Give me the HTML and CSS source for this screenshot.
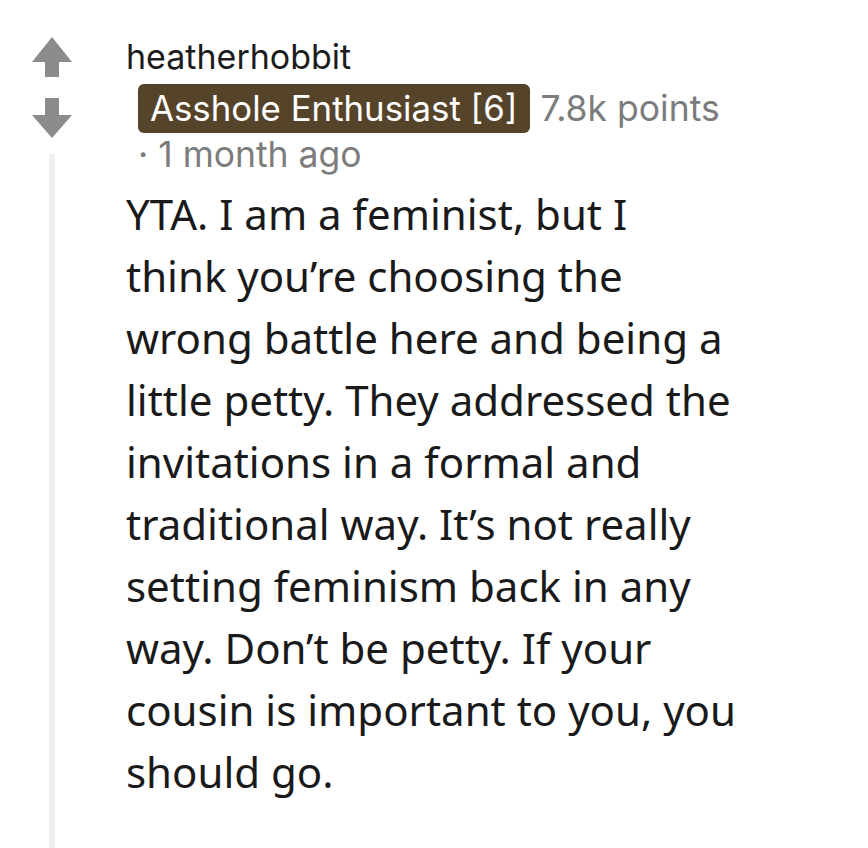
FILE: index.html
```html
<!DOCTYPE html>
<html lang="en">
<head>
    <meta charset="UTF-8">
    <meta name="viewport" content="width=device-width, initial-scale=1.0">
    <title>Comment</title>
    <link rel="stylesheet" href="styles.css">
</head>
<body>
    <div class="comment">
        <div class="votes">
            <svg class="arrow" width="40" height="40" viewBox="0 0 40 40">
                <path d="M20 0 L40 25 H27 V40 H13 V25 H0 Z" fill="#8c8c8c"/>
            </svg>
            <svg class="arrow down" width="40" height="40" viewBox="0 0 40 40">
                <path d="M13 0 H27 V17 H40 L20 40 L0 17 H13 Z" fill="#8c8c8c"/>
            </svg>
            <div class="thread-line"></div>
        </div>

        <div class="comment-body">
            <div class="author">heatherhobbit</div>
            <div class="meta">
                <span class="flair">Asshole Enthusiast [6]</span>
                <span class="points">7.8k points</span>
            </div>
            <div class="meta time">· 1 month ago</div>
            <p class="text">YTA. I am a feminist, but I think you’re choosing the wrong battle here and being a little petty. They addressed the invitations in a formal and traditional way. It’s not really setting feminism back in any way. Don’t be petty. If your cousin is important to you, you should go.</p>
        </div>
    </div>
</body>
</html>
```

FILE: styles.css
```css
body {
    margin: 0;
    background: #ffffff;
    font-family: "Noto Sans", sans-serif;
}

.comment {
    display: flex;
    min-height: 100vh;
}

.votes {
    display: flex;
    flex-direction: column;
    align-items: center;
    width: 40px;
    padding: 37px 0 0 32px;
}

.arrow {
    display: block;
}

.arrow.down {
    margin-top: 21px;
}

.thread-line {
    flex: 1;
    width: 6px;
    margin-top: 16px;
    background-color: #edeff1;
}

.comment-body {
    margin-left: 54px;
    padding-top: 30px;
    width: 610px;
}

.author {
    font-family: Inter, sans-serif;
    font-size: 34px;
    line-height: 54px;
    color: #1c1c1c;
}

.meta {
    display: flex;
    align-items: center;
    gap: 11px;
    margin-left: 12px;
    font-family: Inter, sans-serif;
    font-size: 35.5px;
    color: #7c7c7c;
}

.flair {
    background-color: #56442a;
    color: #ffffff;
    font-size: 34.8px;
    line-height: 49px;
    padding: 0 12px;
    border-radius: 6px;
}

.time {
    line-height: 44px;
}

.text {
    margin: 6px 0 0;
    font-size: 42px;
    line-height: 62px;
    color: #1a1a1b;
}
```
